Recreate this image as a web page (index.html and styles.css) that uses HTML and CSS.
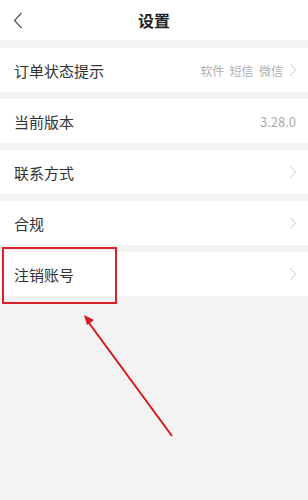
FILE: index.html
```html
<!DOCTYPE html>
<html lang="zh">
<head>
  <meta charset="UTF-8" />
  <meta name="viewport" content="width=device-width, initial-scale=1.0"/>
  <title>设置</title>
  <link rel="stylesheet" href="styles.css">
</head>
<body>

  <header class="topbar">
    <span class="back">
      <svg width="10" height="17" viewBox="0 0 10 17"><path d="M8.5 1 L1.5 8.5 L8.5 16" fill="none" stroke="#555" stroke-width="1.2"/></svg>
    </span>
    <h1>设置</h1>
  </header>

  <div class="list">
    <div class="row">
      <span class="label">订单状态提示</span>
      <span class="value">软件&nbsp;&nbsp;短信&nbsp;&nbsp;微信<svg class="arrow" width="6" height="12" viewBox="0 0 6 12"><path d="M0.5 0.5 L5.5 6 L0.5 11.5" fill="none" stroke="#c8c8c8" stroke-width="1"/></svg></span>
    </div>
    <div class="row">
      <span class="label">当前版本</span>
      <span class="value ver">3.28.0</span>
    </div>
    <div class="row">
      <span class="label">联系方式</span>
      <span class="value"><svg class="arrow" width="6" height="12" viewBox="0 0 6 12"><path d="M0.5 0.5 L5.5 6 L0.5 11.5" fill="none" stroke="#c8c8c8" stroke-width="1"/></svg></span>
    </div>
    <div class="row">
      <span class="label">合规</span>
      <span class="value"><svg class="arrow" width="6" height="12" viewBox="0 0 6 12"><path d="M0.5 0.5 L5.5 6 L0.5 11.5" fill="none" stroke="#c8c8c8" stroke-width="1"/></svg></span>
    </div>
    <div class="row">
      <span class="label">注销账号</span>
      <span class="value"><svg class="arrow" width="6" height="12" viewBox="0 0 6 12"><path d="M0.5 0.5 L5.5 6 L0.5 11.5" fill="none" stroke="#c8c8c8" stroke-width="1"/></svg></span>
    </div>
  </div>

  <!-- annotation -->
  <div class="mark"></div>
  <svg class="pointer" width="308" height="500" viewBox="0 0 308 500">
    <line x1="172" y1="436" x2="89" y2="323" stroke="#d8161c" stroke-width="2"/>
    <path d="M84 315 L94 320 L87 325 Z" fill="#d8161c"/>
  </svg>

</body>
</html>
```

FILE: styles.css
```css
* { margin: 0; padding: 0; box-sizing: border-box; }
body {
  background: #f4f3f3; width: 308px; height: 500px; overflow: hidden;
  font-family: "Noto Sans CJK SC", "Noto Sans", sans-serif; color: #333;
  position: relative;
}

.topbar {
  height: 40px; background: #fff; position: relative;
  display: flex; align-items: center; justify-content: center;
}
.topbar h1 { font-size: 16px; font-weight: bold; color: #222; }
.back { position: absolute; left: 13px; top: 12px; line-height: 0; }

.list { display: flex; flex-direction: column; gap: 7px; margin-top: 8px; }
.row {
  height: 44px; background: #fff; padding: 0 12px 0 14px;
  display: flex; align-items: center; justify-content: space-between;
}
.label { font-size: 15px; color: #333; }
.value { font-size: 12px; color: #b0b0b0; display: flex; align-items: center; }
.value.ver { font-size: 13px; color: #aaa; }
.arrow { margin-left: 7px; }

.mark {
  position: absolute; left: 2px; top: 247px; width: 115px; height: 57px;
  border: 2px solid #d8232a;
}
.pointer { position: absolute; left: 0; top: 0; }
```
